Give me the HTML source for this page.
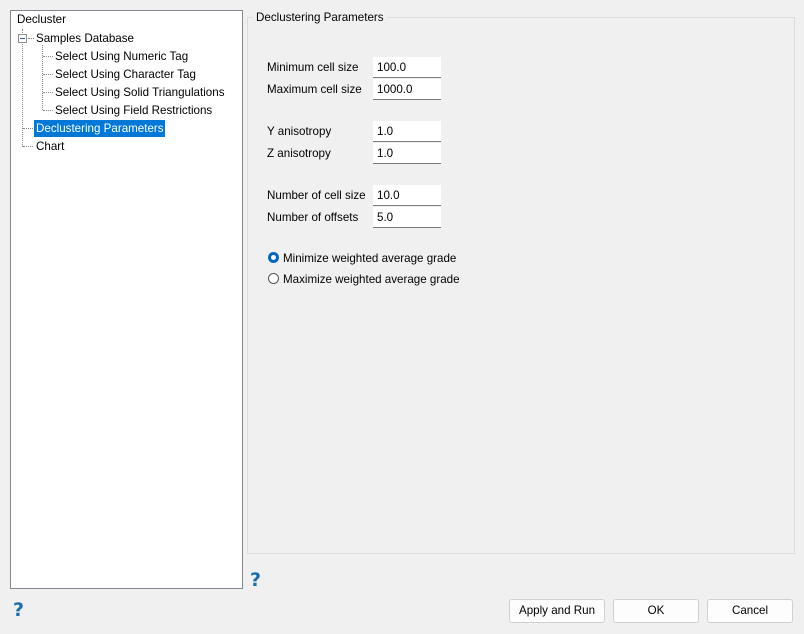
<!DOCTYPE html>
<html><head><style>
body{margin:0;width:804px;height:634px;background:#f0f0f0;font-family:"Liberation Sans",sans-serif;font-size:11.6px;color:#000;position:relative;overflow:hidden}
.a{position:absolute;white-space:nowrap}
.tree{position:absolute;left:10px;top:10px;width:231px;height:577px;background:#fff;border:1px solid #828790}
.grp{position:absolute;left:247px;top:17px;width:546px;height:535px;border:1px solid #dcdcdc}
.inp{position:absolute;left:373px;width:64px;height:20px;background:#fff;border-bottom:1px solid #7a7a7a;padding-left:4px;line-height:21px;box-sizing:content-box}
.btn{position:absolute;top:599px;height:22px;background:#fdfdfd;border:1px solid #d0d0d0;border-radius:3px;text-align:center;line-height:22px}
.q{position:absolute;color:#1a6fae;font-weight:bold;font-size:19px;font-family:"DejaVu Sans",sans-serif}
.dv{position:absolute;border-left:1px dotted #888}
.dh{position:absolute;border-top:1px dotted #888}
.rad{position:absolute;width:11px;height:11px;border-radius:50%;box-sizing:border-box}
</style></head><body>
<div class="tree"></div>
<div class="a" style="left:17px;top:13px">Decluster</div>
<div class="dv" style="left:22px;top:29px;height:118px"></div>
<div style="position:absolute;left:18px;top:34px;width:7px;height:7px;border:1px solid #919191;background:#fff"></div>
<div style="position:absolute;left:20px;top:38px;width:5px;height:1px;background:#3b5aa0"></div>
<div class="dh" style="left:28px;top:38px;width:6px"></div>
<div class="a" style="left:36px;top:32px">Samples Database</div>
<div class="dv" style="left:42px;top:45px;height:65px"></div>
<div class="dh" style="left:43px;top:56px;width:10px"></div>
<div class="dh" style="left:43px;top:74px;width:10px"></div>
<div class="dh" style="left:43px;top:92px;width:10px"></div>
<div class="dh" style="left:43px;top:110px;width:10px"></div>
<div class="a" style="left:55px;top:50px">Select Using Numeric Tag</div>
<div class="a" style="left:55px;top:68px">Select Using Character Tag</div>
<div class="a" style="left:55px;top:86px">Select Using Solid Triangulations</div>
<div class="a" style="left:55px;top:104px">Select Using Field Restrictions</div>
<div class="dh" style="left:23px;top:128px;width:10px"></div>
<div class="dh" style="left:23px;top:146px;width:10px"></div>
<div style="position:absolute;left:34px;top:120px;width:131px;height:17px;background:#0078d7"></div>
<div class="a" style="left:36px;top:122px;color:#fff">Declustering Parameters</div>
<div class="a" style="left:36px;top:140px">Chart</div>

<div class="grp"></div>
<div class="a" style="left:253px;top:11px;background:#f0f0f0;padding:0 3px">Declustering Parameters</div>
<div class="a" style="left:267px;top:61px">Minimum cell size</div>
<div class="a" style="left:267px;top:83px">Maximum cell size</div>
<div class="inp" style="top:57px">100.0</div>
<div class="inp" style="top:79px">1000.0</div>
<div class="a" style="left:267px;top:125px">Y anisotropy</div>
<div class="a" style="left:267px;top:147px">Z anisotropy</div>
<div class="inp" style="top:121px">1.0</div>
<div class="inp" style="top:143px">1.0</div>
<div class="a" style="left:267px;top:189px">Number of cell size</div>
<div class="a" style="left:267px;top:211px">Number of offsets</div>
<div class="inp" style="top:185px">10.0</div>
<div class="inp" style="top:207px">5.0</div>
<div class="rad" style="left:268px;top:252px;background:#0067c0"></div>
<div class="rad" style="left:271px;top:255px;width:5px;height:5px;background:#fff"></div>
<div class="a" style="left:283px;top:252px">Minimize weighted average grade</div>
<div class="rad" style="left:268px;top:273px;border:1px solid #555;background:#fff"></div>
<div class="a" style="left:283px;top:273px">Maximize weighted average grade</div>

<div class="q" style="left:250px;top:569px">?</div>
<div class="q" style="left:13px;top:599px">?</div>
<div class="btn" style="left:509px;width:94px">Apply and Run</div>
<div class="btn" style="left:613px;width:84px">OK</div>
<div class="btn" style="left:707px;width:84px">Cancel</div>
</body></html>
